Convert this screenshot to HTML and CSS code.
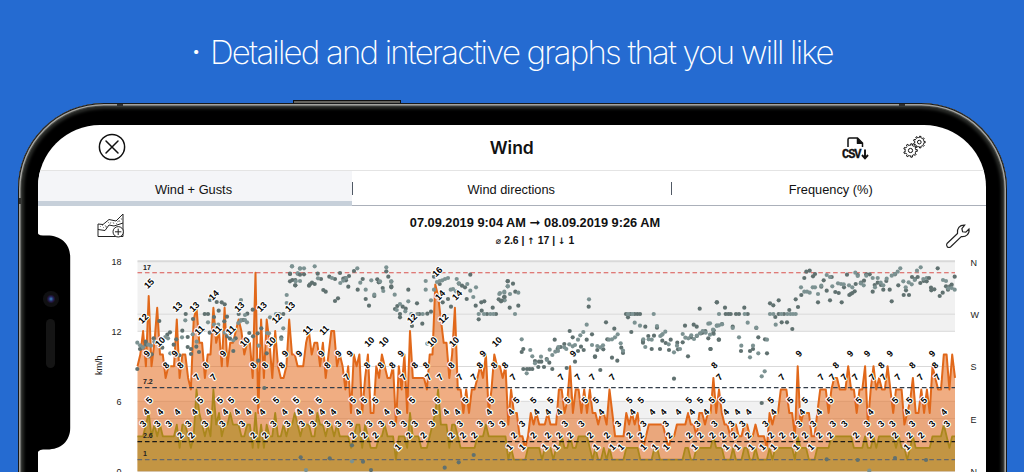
FILE: index.html
```html
<!DOCTYPE html>
<html lang="en">
<head>
  <meta charset="UTF-8">
  <title>Wind</title>
  <link rel="stylesheet" href="styles.css">
</head>
<body>

  <h1 class="headline"><span class="bullet">·</span><span class="headline-text">Detailed and interactive graphs that you will like</span></h1>

  <div class="phone">
    <div class="side-button"></div>
    <div class="antenna antenna-left"></div>
    <div class="antenna antenna-right"></div>
    <div class="antenna antenna-side"></div>

    <div class="screen">
      <header>
        <svg class="close-icon" viewBox="0 0 28 28"><circle cx="14" cy="14" r="12.6"/><path d="M8 8l12 12M20 8L8 20"/></svg>
        <h2>Wind</h2>
        <div class="actions">
          <svg class="csv-icon" viewBox="0 0 28 24">
            <path d="M7 11V3.500Q7 2 8.500 2H16.500L21.500 7V11M16.500 2V7H21.500"/>
            <path class="solid" d="M16 2L22 8H16z"/>
            <path class="down" d="M24 13.500V22M21 19L24 22.300L27 19"/>
            <text x="1" y="21.500" textLength="19.500">CSV</text>
          </svg>
          <svg class="gear-icon" id="gears" viewBox="0 0 24 24"></svg>
        </div>
      </header>

      <nav>
        <div class="tab active">Wind + Gusts</div>
        <div class="tab">Wind directions</div>
        <div class="tab last">Frequency (%)</div>
      </nav>

      <div class="chart-head">
        <svg class="add-icon" viewBox="0 0 28 25">
          <path d="M1 11L6 11.500L12 6.500L19 8L26 1V23.500H1z"/>
          <path d="M1 16.500L8 17.500L12 12L17 13L26 10"/>
          <path class="hatch" d="M3 13l1 1M6 15l1 -1M8 12l1 2M11 9l1 1M13 11l1-2M16 9l1 2M19 11l1-1M22 7l1 2M24 5l1 2M20 9l2 -1M5 12l1 1M9 15l1-2"/>
          <circle cx="21.200" cy="18.800" r="5.200"/>
          <path d="M18 18.800h6.400M21.200 15.600v6.400"/>
        </svg>
        <div class="chart-title">
          <div class="period">07.09.2019 9:04 AM <span class="arrow">➞</span> 08.09.2019 9:26 AM</div>
          <div class="summary"><span>⌀</span> 2.6 | <span>↑</span> 17 | <span>↓</span> 1</div>
        </div>
        <svg class="wrench-icon" viewBox="0 0 26 26">
          <path d="M2 20.500L12.500 10.500C11.700 5.500 14.500 1.800 19.700 2.100L16.900 5.600L17.600 8.800L20.800 9.200L24 6C24.800 11 21 14.200 16.300 13.600L5.500 24C3 25.500 .5 23 2 20.500z"/>
        </svg>
      </div>

      <svg class="chart" id="chart" viewBox="38 250 948 222"></svg>
    </div>

    <svg class="notch" viewBox="0 0 34 228">
      <path d="M0 0V1Q0 6.500 6 6.500H10C24 6.500 33.200 15 33.200 28V199C33.200 212 24 220.500 10 220.500H6Q0 220.500 0 227z"/>
    </svg>
    <div class="camera"></div>
    <div class="speaker"></div>
  </div>

  <script src="chart.js"></script>
</body>
</html>
```

FILE: styles.css
```css
body {
  margin: 0;
  height: 472px;
  overflow: hidden;
  background-color: #256bd1;
  font-family: "Liberation Sans", Arial, sans-serif;
  color: #111;
}

.headline {
  display: flex;
  align-items: center;
  height: 103px;
  margin: 0;
  padding-left: 192px;
  box-sizing: border-box;
  color: #fff;
  font-family: Inter, "Open Sans", sans-serif;
  font-size: 33px;
  font-weight: 200;
  white-space: nowrap;
}

.bullet {
  width: 18px;
  font-weight: 600;
  font-size: 26px;
}

.headline-text {
  letter-spacing: -1.8px;
}

.phone {
  position: relative;
  box-sizing: border-box;
  width: 989px;
  height: 560px;
  margin-left: 17.5px;
  padding: 22px 20.5px 0 20.5px;
  border-radius: 86px;
  background-color: #000;
  box-shadow: inset 0 0 0 1px #18191a, inset 0 0 0 2.5px #a3a39f, inset 0 0 0 3.5px #454744, inset 0 0 3px 6px #292b28;
}

.side-button {
  position: absolute;
  top: -3px;
  left: 275px;
  width: 108px;
  height: 3px;
  box-sizing: border-box;
  border: 1px solid #111;
  border-bottom: none;
  background-color: #65645f;
}

.antenna {
  position: absolute;
  top: 1px;
  width: 6px;
  height: 2px;
  background-color: #30312f;
}

.antenna-left {
  left: 99px;
}

.antenna-right {
  left: 881px;
}

.antenna-side {
  top: 95px;
  left: 1px;
  width: 2px;
  height: 6px;
}

.screen {
  display: flex;
  flex-direction: column;
  height: 538px;
  border-radius: 62px;
  background-color: #fff;
  overflow: hidden;
}

header {
  display: grid;
  grid-template-columns: 1fr auto 1fr;
  align-items: center;
  height: 45px;
  padding: 0 60px 0 59.5px;
  border-bottom: 1px solid #e4e4e4;
}

header svg {
  display: block;
  fill: none;
  stroke: #111;
}

header h2 {
  margin: 0;
  font-family: Inter, sans-serif;
  font-size: 17.5px;
  font-weight: 600;
}

.close-icon {
  width: 28px;
  height: 28px;
  margin-top: -1px;
  stroke-width: 1.5;
  stroke-linecap: round;
}

.actions {
  display: flex;
  justify-content: flex-end;
  align-items: center;
  gap: 33px;
}

.csv-icon {
  width: 28px;
  height: 24px;
  stroke-width: 1.5;
}

.csv-icon text {
  fill: #111;
  stroke: #111;
  stroke-width: .3;
  font-family: "Liberation Mono", monospace;
  font-size: 12px;
  font-weight: bold;
}

.down {
  stroke-width: 1.9;
}

.solid {
  fill: #111;
  stroke: none;
}

.gear-icon {
  width: 24px;
  height: 24px;
  margin-top: -1px;
  stroke-width: 1;
}

nav {
  display: flex;
  flex: none;
  height: 35px;
}

.tab {
  position: relative;
  flex: 1 0 0;
  box-sizing: border-box;
  border-bottom: 1px solid #abb0ba;
  text-align: center;
  font-size: 12.8px;
  line-height: 37px;
}

.tab.active {
  flex: 0 0 314px;
  padding-right: 3px;
  border-bottom: 5px solid #c7d0da;
  background-color: #f4f5f8;
}

.tab + .tab {
  flex: 0 0 318.5px;
}

.tab + .tab.last {
  flex: 1 0 0;
  padding-left: 5px;
}

.tab + .tab::before {
  content: "";
  position: absolute;
  top: 11px;
  left: 0;
  width: 1px;
  height: 13px;
  background-color: #505965;
}

.chart-head {
  display: flex;
  justify-content: space-between;
  flex: none;
  height: 44px;
  padding: 0 15px 0 59px;
}

.chart-head svg {
  fill: none;
  stroke: #222;
}

.add-icon {
  width: 28px;
  height: 25px;
  margin-top: 7px;
  stroke-width: 1;
}

.add-icon circle {
  fill: #fff;
}

.add-icon .hatch {
  stroke: #666;
  stroke-width: .7;
}

.chart-title {
  width: 260px;
  text-align: center;
  font-weight: bold;
  white-space: nowrap;
}

.period {
  margin-top: 9px;
  font-size: 12.8px;
  line-height: 16px;
}

.period .arrow {
  font-family: "DejaVu Sans", sans-serif;
  font-size: 13px;
}

.summary {
  margin-top: 3px;
  font-size: 10.4px;
  line-height: 14px;
}

.summary span {
  font-family: "DejaVu Sans", sans-serif;
  font-size: 9px;
}

.wrench-icon {
  width: 26px;
  height: 26px;
  margin-top: 17px;
  stroke-width: 1.2;
}

.chart {
  display: block;
  flex: none;
  width: 948px;
  height: 222px;
}

.band {
  fill: #f1f1f1;
}

.grid {
  stroke: #d9d9d9;
}

.gust-area {
  fill: #e46a1b;
  fill-opacity: .55;
}

.gust-line {
  fill: none;
  stroke: #e1681a;
  stroke-width: 2;
  stroke-linejoin: round;
}

.wind-area {
  fill: #a9881e;
  fill-opacity: .6;
}

.wind-line {
  fill: none;
  stroke: #aa871c;
  stroke-width: 1.8;
  stroke-linejoin: round;
}

.dark-dot {
  fill: #607170;
}

.light-dot {
  fill: #7c9292;
}

.limit {
  stroke-dasharray: 4.6 2.8;
  stroke-width: 1.2;
}

.value {
  fill: #000;
  stroke: #fff;
  stroke-width: 2.2px;
  stroke-linejoin: round;
  paint-order: stroke;
  font-size: 9px;
  font-weight: bold;
  text-anchor: middle;
}

.axis {
  fill: #222;
  font-size: 9px;
}

.limit-text {
  fill: #222;
  font-size: 7px;
  font-weight: bold;
}

.notch {
  position: absolute;
  top: 126px;
  left: 19.500px;
  width: 34px;
  height: 228px;
}

.camera {
  position: absolute;
  top: 188px;
  left: 25px;
  width: 16px;
  height: 16px;
  border-radius: 50%;
  background: radial-gradient(circle, #4384bd 0, #23366f 2px, #261743 3px, #101012 4.500px);
}

.speaker {
  position: absolute;
  top: 216px;
  left: 28.500px;
  width: 9px;
  height: 49px;
  border-radius: 5px;
  background-color: #151515;
}
```

FILE: chart.js
```javascript
const chart = document.getElementById('chart');
const LEFT = 137.5;
const RIGHT = 955;
const ZERO = 471.3;
const UNIT = 11.68;

// one value every five minutes
const gusts = [
  9,10,12,9,15,9,11,14,10,10,8,9,9,9,13,8,10,10,8,7,13,14,11,11,8,10,10,14,11,12,
  9,14,9,11,11,12,13,12,10,11,11,8,17,5,13,8,13,11,8,12,9,8,8,9,13,10,10,9,9,9,
  11,12,10,11,11,9,11,8,10,12,12,9,10,9,7,9,5,10,9,10,5,8,10,5,5,9,8,10,9,8,
  8,9,4,9,7,10,5,12,8,8,8,8,8,7,10,10,16,15,13,11,11,8,10,14,7,7,5,7,5,7,
  7,8,9,8,10,5,7,10,9,9,8,9,4,7,5,5,3,3,2,3,5,4,5,4,4,4,5,4,4,4,
  7,7,5,6,9,5,7,7,5,7,5,7,5,5,4,5,5,4,7,5,3,3,3,3,5,4,5,4,5,3,
  2,3,4,4,4,4,4,4,3,2,3,3,4,4,4,4,5,4,4,3,5,5,4,5,5,8,5,7,5,4,
  4,3,4,4,3,3,4,4,3,3,4,3,3,3,2,5,4,5,5,7,7,7,5,5,3,9,4,5,5,5,
  3,3,5,7,7,7,5,7,8,8,7,7,7,9,7,7,5,7,7,9,4,7,9,7,8,7,7,9,7,5,
  7,7,7,4,5,6,8,5,5,7,5,7,5,9,8,7,7,10,10,7,10,8
];

const wind = [
  3,3,3,4,5,3,4,3,4,3,3,3,3,3,4,2,4,4,3,2,3,7,5,4,3,4,3,7,4,5,
  3,4,4,5,4,4,4,3,3,4,4,2,5,2,4,2,4,3,3,5,3,3,4,3,4,4,5,4,3,4,
  4,4,3,3,5,4,4,3,4,4,3,4,3,3,3,3,2,3,4,4,2,4,3,2,2,2,3,3,4,3,
  3,3,1,3,3,3,2,5,3,3,3,2,2,2,3,4,5,7,4,4,4,2,4,4,3,2,2,2,2,2,
  2,3,3,3,4,3,3,3,3,3,3,3,1,2,1,1,1,1,1,2,2,2,2,2,1,2,2,2,1,2,
  2,3,2,2,3,2,2,3,3,3,3,2,1,2,1,1,2,1,2,1,1,1,1,1,2,2,2,2,2,1,
  1,1,1,1,2,2,1,1,1,1,1,1,1,1,1,2,2,1,1,2,2,2,2,2,2,3,2,2,2,1,
  1,1,2,1,1,1,2,2,1,1,2,1,1,1,1,2,1,2,2,2,2,2,2,2,1,3,2,2,2,1,
  1,1,2,2,2,2,2,3,3,3,3,3,3,3,3,2,2,2,2,3,2,2,3,2,3,3,3,3,3,3,
  2,3,2,2,1,2,3,2,2,2,2,2,2,3,3,3,3,4,3,2,3,3
];

// wind direction readings in groups from left to right: x y pairs, three units per pixel
const directions = [
  { from: 240, top: 250, dark: '172 357 180 297 197 275 187 293 207 319 215 313 198 284 221 265 238 213 270 247 262 254 247 293 281 284 289 268 298 316 307 242 323 291 333 297 333 312 323 261 349 290 357 306 317 192 339 207 384 192 390 150 402 201 410 156 416 182 425 157 434 163 441 200 433 214 476 192 502 191 518 179 490 210 508 249 460 303 467 265 450 266 442 259 544 235 560 310 535 332 553 414 604 262 610 192 637 90 630 94 646 106 646 90 630 72 653 71 374 192 483 211 519 259 533 250 389 248 358 240', light: '172 278 180 286 189 292 205 284 213 287 223 275 231 280 256 261 264 265 271 310 306 262 316 211 338 253 350 275 384 217 370 240 402 224 415 224 434 248 449 255 460 271 475 219 483 150 482 212 495 210 495 195 501 217 536 287 561 249 567 250 570 202 588 192 598 192 610 235 604 267 620 135 620 159 636 49 653 70 660 56 660 93' },
  { from: 870, top: 250, dark: '0 71 16 106 30 74 42 73 57 107 66 98 83 71 93 87 107 125 118 80 135 87 135 153 144 145 150 69 160 86 168 91 175 110 177 78 192 63 203 119 218 87 227 147 237 167 253 138 262 88 269 96 278 114 289 64 295 80 304 95 304 112 315 177 322 168 330 192 338 170 347 176 355 119 381 160 397 221 388 192 412 191 423 185 366 228 432 80 449 102 483 170 474 147 507 101 516 107 530 147 541 74 557 167 566 208 574 157 575 182 583 154 591 192 608 173 618 192 626 148 633 154 642 141 653 93 186 586 219 635 243 660 464 653 506 637 551 615 32 622 119 625 60 103 100 120 74 102 166 84 266 97 304 109 330 202 458 157 525 112', light: '6 49 17 94 30 55 42 55 74 49 84 85 126 84 151 99 160 92 169 84 202 55 211 98 227 119 244 91 253 134 270 94 280 123 289 52 304 94 314 134 320 180 330 162 346 184 355 154 364 192 372 206 382 192 398 192 407 119 423 151 432 119 441 96 449 93 457 91 465 87 474 84 500 87 506 100 482 119 489 117 498 124 508 130 532 102 541 122 550 141 558 112 566 192 582 192 601 192 610 192 628 132 643 128 644 151 653 109 186 634 48 660 407 93 412 281' },
  { from: 1500, top: 250, dark: '5 152 14 141 23 94 39 101 29 173 46 125 55 167 65 306 70 297 70 357 81 357 89 357 97 357 105 333 117 335 115 351 124 335 132 351 140 327 148 338 157 357 164 269 182 291 193 282 200 354 209 243 218 262 225 335 234 303 243 290 251 300 260 269 276 253 285 321 292 300 301 360 310 298 318 217 336 323 343 236 352 332 364 293 369 309 378 192 384 202 394 246 404 192 412 192 420 192 436 230 445 258 455 297 462 257 471 233 480 297 487 272 497 279 507 300 512 269 522 386 532 278 548 277 555 227 564 319 573 262 581 224 590 230 599 176 608 248 616 243 625 265 631 297 641 241 650 157 656 269 173 296 266 170 285 319 391 192 429 272 429 278 534 298 590 258 603 250 322 268', light: '0 129 13 125 23 109 30 132 55 128 45 192 65 268 80 370 91 300 97 319 105 340 123 320 141 330 149 299 157 315 166 305 175 291 174 303 193 292 199 297 208 283 218 289 225 285 234 269 241 256 250 246 260 224 267 148 276 285 292 288 301 292 309 286 327 269 336 268 345 262 353 253 362 280 369 302 384 192 397 192 404 218 420 227 430 268 436 291 446 268 455 269 461 192 471 228 481 258 488 252 496 245 506 283 522 307 531 287 540 297 548 252 556 263 565 265 574 256 582 267 591 257 600 250 608 243 617 248 625 221 641 252 650 227 657 192 485 255' },
  { from: 2130, top: 250, dark: '2 297 10 249 21 157 27 269 36 222 45 173 47 192 55 192 62 192 68 230 78 192 87 192 93 303 103 173 113 192 120 303 129 297 139 234 145 262 155 459 165 268 171 310 180 160 190 166 196 201 206 151 206 192 215 217 222 192 231 217 238 180 247 237 257 148 264 171 274 135 283 84 289 65 299 62 309 79 315 72 324 157 334 110 341 91 350 122 360 151 365 81 376 126 386 129 395 157 402 112 411 74 418 135 427 129 437 102 443 75 453 98 462 92 469 73 479 73 488 125 494 105 503 98 513 105 520 119 529 93 539 119 545 154 555 73 565 106 581 135 588 121 597 135 606 81 615 87 623 81 631 99 641 93 650 94 350 628 443 630 555 624 648 630 422 132 434 124', light: '0 220 0 254 9 239 21 227 27 226 36 223 68 234 87 262 94 287 104 192 113 218 129 287 120 322 145 310 155 379 164 364 139 233 171 269 180 192 190 192 197 224 214 192 232 192 241 192 249 192 257 192 273 112 283 125 291 125 299 128 308 112 315 112 324 132 334 107 350 75 360 81 367 109 384 100 393 102 401 103 417 106 427 112 436 68 443 78 452 100 461 106 469 77 488 84 495 112 503 84 512 98 520 106 530 86 545 77 554 72 563 65 571 55 580 94 587 112 596 97 605 103 614 90 621 62 632 52 640 87 650 84 478 662' },
  { from: 2580, top: 200, dark: '207 234 213 263 214 271 223 268 233 205 239 288 248 278 258 259 264 269 270 259 275 254 284 230', light: '249 240 258 243 265 265 275 264 284 269' }
];

// labels that are kept after overlap removal, x position per value
const labels = [
  { from: 240, 15: [207], 12: [190, 590], 13: [292, 343, 478, 545, 630], 14: [401], 11: [358, 410, 452],
    10: [240, 494, 572], 9: [200, 284, 429, 615, 655], 8: [258, 301, 377, 520, 555, 605], 7: [350, 400],
    5: [207, 360, 419, 453, 528, 588, 648], 4: [198, 240, 291, 343, 385, 435, 470, 504, 546, 613, 655],
    3: [189, 232, 266, 325, 375, 427, 486, 580, 622], 2: [301, 334, 520, 555] },
  { from: 870, 16: [442], 14: [450, 501], 12: [366, 460], 11: [52, 102], 10: [238, 281, 426, 492, 620],
    9: [27, 94, 145, 179, 332, 578], 8: [112, 231, 272, 307, 374, 408, 484, 569, 612, 646], 7: [170, 340, 415, 450, 509, 551],
    5: [18, 86, 188, 222, 256, 366, 442, 526, 603], 4: [27, 61, 95, 129, 204, 289, 323, 433, 467, 501, 596],
    3: [35, 69, 112, 145, 179, 238, 273, 307, 341, 374, 425, 509, 569, 603, 637], 2: [188, 222, 256, 357, 400, 484, 518, 552], 1: [323, 658] },
  { from: 1500, 9: [219], 8: [15, 643], 7: [39, 183, 233, 277, 337, 658], 5: [49, 100, 151, 202, 254, 287, 388, 422, 566, 600, 635],
    4: [32, 109, 143, 177, 303, 397, 456, 490, 534, 575, 618], 3: [7, 66, 194, 244, 354, 430, 497, 592, 643],
    2: [41, 100, 143, 177, 210, 270, 320, 388, 422, 507, 567, 600, 637], 1: [66, 134, 168, 288, 337, 362, 430, 464, 498, 583] },
  { from: 2130, 9: [266, 420, 471, 539], 8: [377, 514, 607], 7: [215, 333, 367, 402, 436, 487, 520, 563, 631],
    5: [37, 182, 241, 284, 360, 446, 555, 598, 641], 4: [47, 81, 115, 190, 275, 326, 481, 590],
    3: [64, 97, 166, 267, 309, 368, 403, 470, 513, 547, 606], 2: [38, 72, 114, 182, 216, 250, 284, 327, 360, 437, 480, 555, 598, 633], 1: [47, 81, 123, 157, 190, 258, 302, 590] },
  { from: 2580, 9: [216], 8: [225], 7: [232], 4: [251], 3: [216, 260] }
];

function yOf(v) {
  return ZERO - v * UNIT;
}

function hline(y, cls, extra) {
  return `<line class="${cls}" x1="${LEFT}" x2="${RIGHT}" y1="${y}" y2="${y}" ${extra || ''}/>`;
}

function series(values, name) {
  const step = (RIGHT - LEFT) / (values.length - 1);
  const points = values.map((v, i) => `${(LEFT + i * step).toFixed(1)} ${yOf(v).toFixed(1)}`).join('L');
  return `<path class="${name}-area" d="M${LEFT} ${ZERO}L${points}L${RIGHT} ${ZERO}z"/><path class="${name}-line" d="M${points}"/>`;
}

function dots(list, group, cls) {
  const n = list.split(' ').map(Number);
  let out = '';
  for (let i = 0; i < n.length; i += 2) {
    out += `<circle class="${cls}" cx="${((n[i] + group.from) / 3).toFixed(1)}" cy="${(group.top + n[i + 1] / 3).toFixed(1)}" r="2.1"/>`;
  }
  return out;
}

function drawChart() {
  let svg = `<rect class="band" x="${LEFT}" y="261" width="${RIGHT - LEFT}" height="70.2"/>`;
  svg += `<rect class="band" x="${LEFT}" y="401.2" width="${RIGHT - LEFT}" height="70"/>`;
  [331.3, 401.3, 314.2, 366.5, 418.5, 471.3].forEach(y => svg += hline(y, 'grid'));
  svg += hline(261.2, 'grid', 'stroke-width="2"');

  svg += series(gusts, 'gust') + series(wind, 'wind');
  svg += hline(yOf(17), 'limit', 'stroke="#d9534f"');
  svg += hline(387.6, 'limit', 'stroke="#343f4b"');
  svg += hline(441.6, 'limit', 'stroke="#181818"');
  svg += hline(yOf(1), 'limit', 'stroke="#66686c"');

  directions.forEach(d => svg += dots(d.dark, d, 'dark-dot') + dots(d.light, d, 'light-dot'));

  svg += '<text class="limit-text" x="143" y="269.6">17</text>';
  svg += '<text class="limit-text" x="143" y="384.4">7.2</text>';
  svg += '<text class="limit-text" x="143" y="438.2">2.6</text>';
  svg += '<text class="limit-text" x="143" y="456.2">1</text>';

  labels.forEach(group => {
    Object.keys(group).filter(key => key !== 'from').forEach(value => {
      group[value].forEach(pos => {
        const x = ((pos + group.from) / 3).toFixed(1);
        const y = (yOf(Number(value) + 1) - 1).toFixed(1);
        svg += `<text class="value" transform="translate(${x} ${y}) rotate(-45)" y="3.2">${value}</text>`;
      });
    });
  });

  [[18, 265.3], [12, 335.4], [6, 405.4], [0, 475.4]].forEach(t => {
    svg += `<text class="axis" x="121.500" y="${t[1]}" text-anchor="end">${t[0]}</text>`;
  });
  [['N', 266.3], ['W', 318.4], ['S', 370.3], ['E', 423.4], ['N', 475]].forEach(t => {
    svg += `<text class="axis" x="970.500" y="${t[1]}">${t[0]}</text>`;
  });
  svg += '<text class="axis" transform="translate(101.500 375) rotate(-90)">km/h</text>';
  chart.innerHTML = svg;
}

function gear(cx, cy, r) {
  let d = '';
  for (let i = 0; i < 9; i++) {
    [[-.5, .78], [-.22, .78], [-.18, 1], [.18, 1], [.22, .78], [.5, .78]].forEach(p => {
      const a = (i + p[0]) * Math.PI * 2 / 9;
      d += `${d ? 'L' : 'M'}${(cx + Math.cos(a) * r * p[1]).toFixed(2)} ${(cy + Math.sin(a) * r * p[1]).toFixed(2)}`;
    });
  }
  return `<path d="${d}z"/><circle cx="${cx}" cy="${cy}" r="${r * .31}"/>`;
}

drawChart();
document.getElementById('gears').innerHTML = gear(8.5, 15.5, 6.8) + gear(17.3, 7.1, 5.9);
```
